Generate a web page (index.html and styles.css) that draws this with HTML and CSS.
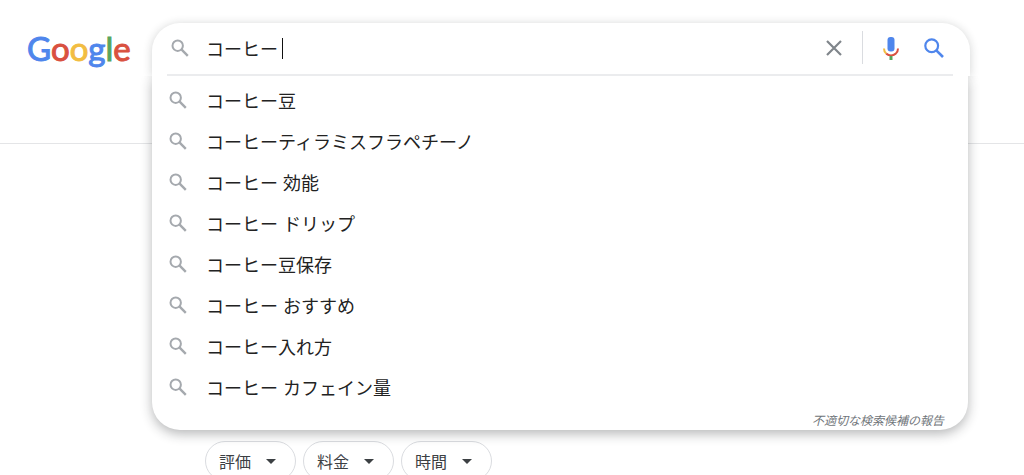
FILE: index.html
```html
<!DOCTYPE html>
<html lang="ja">
<head>
    <meta charset="UTF-8">
    <meta name="viewport" content="width=device-width, initial-scale=1.0">
    <title>コーヒー - Google 検索</title>
    <link rel="stylesheet" href="styles.css">
</head>
<body>
    <!-- アイコン定義 -->
    <svg class="defs" aria-hidden="true">
        <symbol id="glass" viewBox="0 0 18 18">
            <circle cx="6.7" cy="6.7" r="5.2" fill="none" stroke="currentColor" stroke-width="2"/>
            <path d="M10.4 10.4L16.8 16.8" fill="none" stroke="currentColor" stroke-width="2.4"/>
        </symbol>
    </svg>
    <header class="header">
        <a class="logo" href="#" aria-label="Google"><span class="blue">G</span><span class="red">o</span><span class="yellow">o</span><span class="blue">g</span><span class="green">l</span><span class="red">e</span></a>
        <form class="search">
            <div class="searchbox">
                <svg class="glass"><use href="#glass"/></svg>
                <div class="field">
                    <input type="text" id="q" value="コーヒー" aria-label="検索" autocomplete="off">
                    <span class="caret"></span>
                </div>
                <button class="clear" type="button" aria-label="クリア">
                    <svg width="16" height="16" viewBox="0 0 16 16"><path d="M1 1L15 15M15 1L1 15" fill="none" stroke="#80868b" stroke-width="2.2"/></svg>
                </button>
                <button class="mic" type="button" aria-label="音声検索">
                    <svg width="16" height="24" viewBox="0 0 16 24">
                        <rect x="4.5" y="1" width="7" height="14.5" rx="3" fill="#4f86ec"/>
                        <path d="M1 12.5C1 14.8 1.8 16.4 3.2 17.6" fill="none" stroke="#f2bd42" stroke-width="2"/>
                        <path d="M3.2 17.6C6 19.8 10 19.8 12.8 17.6C14.2 16.4 15 14.8 15 12.5" fill="none" stroke="#d95140" stroke-width="2"/>
                        <path d="M8 20V24" stroke="#58a55c" stroke-width="3"/>
                    </svg>
                </button>
                <button class="submit" type="submit" aria-label="Google 検索">
                    <svg width="20" height="20" viewBox="0 0 20 20"><circle cx="7.7" cy="7.7" r="6.4" fill="none" stroke="#4f86ec" stroke-width="2.2"/><path d="M12.3 12.3L19 19" stroke="#4f86ec" stroke-width="2.6"/></svg>
                </button>
            </div>
            <!-- 検索候補 -->
            <div class="suggest">
                <ul>
                    <li><a href="#"><svg class="glass"><use href="#glass"/></svg>コーヒー豆</a></li>
                    <li><a href="#"><svg class="glass"><use href="#glass"/></svg>コーヒーティラミスフラペチーノ</a></li>
                    <li><a href="#"><svg class="glass"><use href="#glass"/></svg>コーヒー 効能</a></li>
                    <li><a href="#"><svg class="glass"><use href="#glass"/></svg>コーヒー ドリップ</a></li>
                    <li><a href="#"><svg class="glass"><use href="#glass"/></svg>コーヒー豆保存</a></li>
                    <li><a href="#"><svg class="glass"><use href="#glass"/></svg>コーヒー おすすめ</a></li>
                    <li><a href="#"><svg class="glass"><use href="#glass"/></svg>コーヒー入れ方</a></li>
                    <li><a href="#"><svg class="glass"><use href="#glass"/></svg>コーヒー カフェイン量</a></li>
                </ul>
                <a class="report" href="#">不適切な検索候補の報告</a>
            </div>
        </form>
    </header>
    <!-- 絞り込みボタン -->
    <main class="filters">
        <button type="button">評価<span class="arrow"></span></button>
        <button type="button">料金<span class="arrow"></span></button>
        <button type="button">時間<span class="arrow"></span></button>
    </main>
</body>
</html>
```
FILE: styles.css
```css
* {
    margin: 0;
    padding: 0;
    box-sizing: border-box;
}
body {
    background: #fff;
    color: #222;
    font-family: "Liberation Sans", "Noto Sans CJK JP", sans-serif;
    overflow: hidden;
}
ul {
    list-style: none;
}
a {
    color: inherit;
    text-decoration: none;
}
button {
    border: 0;
    background: none;
    font: inherit;
    cursor: pointer;
}
svg {
    display: block;
}
.defs {
    position: absolute;
    width: 0;
    height: 0;
}
.glass {
    width: 18px;
    height: 18px;
    color: #a5a9ae;
    flex: none;
}
.header {
    display: flex;
    align-items: flex-start;
    height: 144px;
    padding: 23px 54px 0 27px;
    border-bottom: 1px solid #e4e5e7;
}
/* ロゴ */
.logo {
    width: 125px;
    flex: none;
    font-family: Lato, sans-serif;
    font-size: 33px;
    line-height: 51px;
    -webkit-text-stroke: 1px;
}
.blue {
    color: #4f86ec;
}
.red {
    color: #d95140;
}
.yellow {
    color: #f2bd42;
}
.green {
    color: #58a55c;
}
/* 検索ボックス */
.search {
    flex: 1;
    position: relative;
}
.searchbox {
    display: flex;
    align-items: center;
    height: 53px;
    padding: 0 26px 4px 19px;
    background: #fff;
    border-radius: 28px 28px 0 0;
    box-shadow: 0 1px 10px rgba(32, 33, 36, 0.2);
}
.field {
    flex: 1;
    position: relative;
    margin-left: 17px;
}
.field input {
    display: block;
    width: 100%;
    height: 32px;
    border: 0;
    outline: 0;
    background: none;
    color: #222;
    font-family: inherit;
    font-size: 18px;
}
.caret {
    position: absolute;
    top: 6px;
    left: 76px;
    width: 1px;
    height: 21px;
    background: #111;
}
.clear {
    padding: 8px 20px;
}
.mic {
    display: flex;
    align-items: center;
    height: 33px;
    padding: 0 20px;
    border-left: 1px solid #dadce0;
}
.submit {
    padding: 6px 0 6px 5px;
}
/* 検索候補リスト */
.suggest {
    position: absolute;
    top: 100%;
    left: 0;
    right: 2px;
    padding: 3px 24px 0 17px;
    background: #fff;
    border-radius: 0 0 28px 28px;
    box-shadow: 0 4px 12px rgba(32, 33, 36, 0.32);
    clip-path: inset(0 -20px -24px -20px);
}
.searchbox::after {
    content: "";
    position: absolute;
    top: 51px;
    left: 15px;
    right: 17px;
    height: 2px;
    background: #ebecee;
}
.suggest li a {
    display: flex;
    align-items: center;
    gap: 19px;
    height: 41px;
    font-size: 18px;
}
.report {
    display: block;
    height: 23px;
    color: #70757a;
    font-size: 12px;
    font-style: italic;
    line-height: 28px;
    text-align: right;
}
/* 絞り込み */
.filters {
    display: flex;
    gap: 7px;
    padding: 297px 0 0 205px;
}
.filters button {
    display: flex;
    align-items: center;
    gap: 15px;
    height: 40px;
    padding: 0 19px 0 13px;
    border: 1px solid #dadce0;
    border-radius: 20px;
    color: #3c4043;
    font-size: 16px;
}
.arrow {
    border: 5px solid transparent;
    border-top-color: #3c4043;
    border-bottom: 0;
}
```
